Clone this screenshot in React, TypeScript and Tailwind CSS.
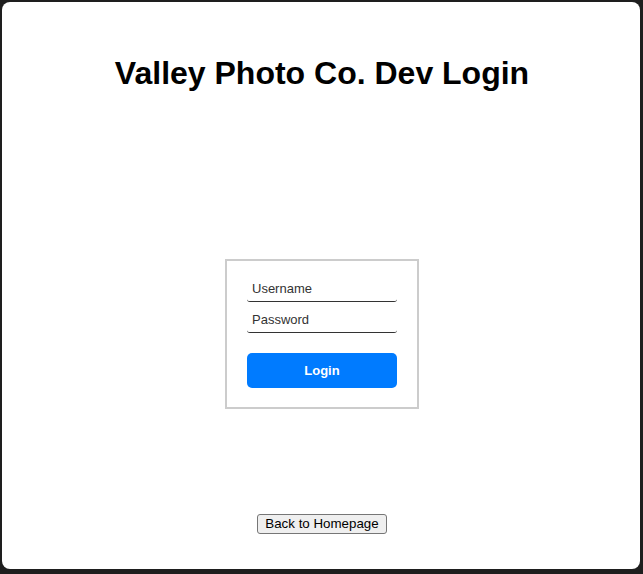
export default function App() {
  return (
    <div className="h-[574px] w-[643px] bg-[#1e1e1e] pl-[2px] pt-[2px] pr-[3px] pb-[5px] font-['Liberation_Sans',Arial,sans-serif]">
      <div className="h-[567px] w-[638px] rounded-lg bg-white pl-[2px] flex flex-col items-center">
        <h1 className="mt-[53px] text-[32px] leading-[37px] font-bold text-black">Valley Photo Co. Dev Login</h1>

        {/* Login box */}
        <form
          className="mt-[167px] w-[194px] border-2 border-[#cccccc] px-[20px] pt-[15px] pb-[19px] flex flex-col"
          onSubmit={(e) => e.preventDefault()}
        >
          <input
            type="text"
            placeholder="Username"
            className="h-[26px] w-[150px] rounded-[3px] border-b border-[#333] px-[5px] text-[13px] text-[#222] placeholder:text-[#333] outline-none"
          />
          <input
            type="password"
            placeholder="Password"
            className="mt-[5px] h-[26px] w-[150px] rounded-[3px] border-b border-[#333] px-[5px] text-[13px] text-[#222] placeholder:text-[#333] outline-none"
          />
          <button
            type="submit"
            className="mt-[20px] h-[35px] w-[150px] rounded-[5px] bg-[#007bff] text-[13px] font-bold text-white"
          >
            Login
          </button>
        </form>

        <button className="mt-[105px] h-[20px] rounded-[3px] border border-[#767676] bg-[#efefef] px-[7px] text-[13.33px] leading-[16px] text-black">
          Back to Homepage
        </button>
      </div>
    </div>
  );
}
